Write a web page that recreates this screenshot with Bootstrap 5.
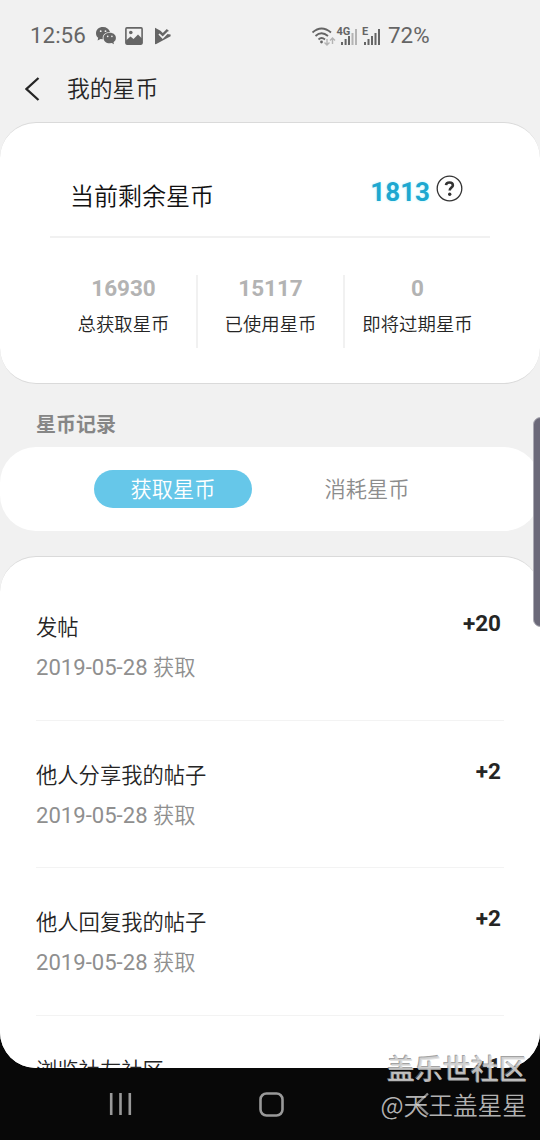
<!DOCTYPE html>
<html lang="zh-CN">
<head>
<meta charset="utf-8">
<meta name="viewport" content="width=device-width, initial-scale=1">
<title>我的星币</title>
<link href="https://cdn.jsdelivr.net/npm/bootstrap@5.3.0/dist/css/bootstrap.min.css" rel="stylesheet">
<style>
body{background:#080808;font-family:Roboto,"Noto Sans CJK SC",sans-serif;color:#252525;overflow:hidden}
svg{display:block;flex:none}
.screen{width:540px;height:1140px}
.page-area{height:1068px;background:#f1f1f1;border-radius:0 0 36px 36px;overflow:hidden}
.han{font-family:"Noto Sans CJK SC",sans-serif;font-weight:350}
.status{height:64px;padding:8px 0 0 30px;color:#656565;font-size:22.4px}
.clock{width:65px}
.icon-photo{margin-left:8px}
.icon-play{margin-left:11px}
.signals{margin-left:139px}
.battery{margin-left:5px}
.appbar{height:58px;padding:0 0 9px 25px;font-size:22.8px}
.appbar-title{margin-left:27px}
.panel{background:#fff;border-radius:36px}
.panel-line{border-top:1px solid #dadada}
.summary{height:262px;padding:0 50px;border-bottom:1px solid #dadada}
.remain{height:115px;border-bottom:2px solid #f1f1f1;padding:0 27px 0 20px}
.remain-label{font-size:24px;color:#111;line-height:34px;padding-top:55px}
.remain-count{font-size:26px;font-weight:700;color:#1da8d0;line-height:32px;padding-top:53px;text-shadow:0 0 3px #b7f5ff}
.help{margin:52px 0 0 6px}
.stats{padding:37px 0 0 1px}
.stat-cell{height:73px;text-align:center;line-height:26px;border-right:2px solid #f1f1f1}
.stat-cell:last-child{border-right:0}
.stat-number{font-size:22.5px;font-weight:700;color:#b3b3b3}
.stat-name{font-size:18.4px;padding-top:9px;white-space:nowrap}
.log-title{height:63px;padding:26px 0 0 36px;font-size:20px;line-height:28px;font-weight:700;color:#868686;font-family:"Noto Sans CJK SC",sans-serif}
.tabs-panel{height:84px;padding-left:94px}
.tab-on,.tab-off{width:158px;height:38px;border-radius:19px;font-size:21.2px;line-height:34px;text-align:center;padding:0 0 3px;border:0}
.tab-on{background:#66c7e9;color:#fff}
.tab-off{margin-left:36px;color:#8c8c8c;background:none}
.records{margin-top:25px;height:560px;border-radius:36px 36px 0 0;padding:16px 36px 0}
.record{height:147.7px;border-bottom:1.5px solid #f3f3f3;padding:36px 3px 0 0}
.record-name{font-size:21.3px;line-height:34px}
.record-date{font-size:22.1px;line-height:30px;color:#8f8f8f;padding-top:8px}
.record-date .han{font-size:21.2px}
.record-score{font-size:22.5px;line-height:25px;font-weight:700;padding-top:2px}
.edge-handle{right:-8px;top:417px;width:15px;height:210px;border-radius:8px;background:#6b6979;border:1px solid #aaa9b2}
.navbar-keys{height:72px;padding-left:109px}
.home-key{margin-left:127px}
.back-key{margin-left:131px}
.watermark{right:13px;top:1050px;text-align:right;color:rgba(218,218,218,.82);white-space:nowrap;font-family:"Noto Sans CJK SC",sans-serif}
.wm-site{font-size:28px;line-height:36px;font-weight:500;text-shadow:-1px -1px 0 rgba(120,120,120,.7)}
.wm-user{font-size:24.7px;line-height:36px;font-weight:350}
</style>
</head>
<body>
<div class="screen position-relative overflow-hidden">
  <main class="page-area">
    <div class="status d-flex align-items-center">
      <div class="clock">12:56</div>
      <svg width="22" height="20" viewBox="0 0 22 20" fill="#656565"><path d="M8 1C3.700 1 1 3.700 1 7.200c0 2 .9 3.500 2.200 4.500L2.600 14.500l3-1.600 2.200.4C7 9 10.500 6 15 6 14.200 3 11.500 1 8 1z"/><path d="M14.800 6.800c-3.800 0-6.300 2.200-6.300 5.200s2.500 5.300 6.300 5.300l2-.3 2.200 1.300-.5-2.100c1.500-1 2.400-2.400 2.400-4.200 0-3-2.500-5.200-6.100-5.200z"/><g fill="#f1f1f1"><circle cx="5.700" cy="5.200" r=".9"/><circle cx="10.500" cy="5.200" r=".9"/><circle cx="12.700" cy="10.400" r=".8"/><circle cx="16.900" cy="10.400" r=".8"/></g></svg>
      <svg class="icon-photo" width="18" height="18" viewBox="0 0 18 18"><rect x=".9" y=".9" width="16.200" height="16.200" rx="1" fill="none" stroke="#656565" stroke-width="1.600"/><path d="M1 13.500l4.500-4 3 2.500L13 7.500l4 4V17H1z" fill="#656565"/><circle cx="5.800" cy="5.500" r="1.800" fill="#656565"/></svg>
      <svg class="icon-play" width="18" height="18" viewBox="0 0 18 18"><path d="M1 .8L6.500 3.800 8.800 6 12.800 2 15 4l-2 3 3.600.6v1.700L1.800 17.300 1 17z" fill="#656565"/><path d="M5 7l3.700 3.700L14.800 4.500" fill="none" stroke="#f1f1f1" stroke-width="1.700"/></svg>
      <svg class="signals" width="72" height="22" viewBox="0 0 72 22"><g fill="none" stroke="#656565" stroke-width="1.800"><path d="M1.500 7.500Q10.500-.5 20 7.500M4.500 11q6-5.500 12.500 0M7.500 14.500q3-3 6.500 0"/></g><circle cx="10.500" cy="17" r="1.400" fill="#656565"/><path d="M16 14v6m-2.500-2.500L16 20l2.500-2.500M21.500 19v-6m-2.500 2.500l2.500-2.500 2.500 2.500" fill="none" stroke="#b4b4b4" stroke-width="1.400"/><g font-family="Roboto,sans-serif" font-weight="700" font-size="11" fill="#656565"><text x="25.500" y="10">4G</text><text x="51" y="10">E</text></g><g fill="#656565"><path d="M30 17h2v3h-2zM33.600 14h2v6h-2zM37 11h2v9h-2zM53 17h2v3h-2zM56.500 14h2v6h-2zM60 11h2v9h-2zM63.500 8h2v12h-2zM67 4h2v16h-2z"/></g><path d="M40.500 8h2v12h-2zM44 4h2v16h-2z" fill="#b4b4b4"/></svg>
      <div class="battery">72%</div>
    </div>
    <header class="appbar d-flex align-items-center">
      <svg width="15" height="24" viewBox="0 0 15 24"><path d="M13.500 1L1.500 12l12 11" fill="none" stroke="#252525" stroke-width="2.300"/></svg>
      <div class="appbar-title han">我的星币</div>
    </header>

    <section class="panel panel-line summary">
      <div class="remain d-flex justify-content-between">
        <div class="remain-label han">当前剩余星币</div>
        <div class="d-flex">
          <div class="remain-count">1813</div>
          <svg class="help" width="27" height="27" viewBox="0 0 27 27"><circle cx="13.500" cy="13.500" r="12.300" fill="none" stroke="#333" stroke-width="1.300"/><path d="M10 10.200Q10.200 7.500 13.500 7.500t3.400 2.700c0 2.300-3.200 2.500-3.200 5.300" fill="none" stroke="#333" stroke-width="2.600"/><circle cx="13.700" cy="19.300" r="1.700" fill="#333"/></svg>
        </div>
      </div>
      <div class="stats row g-0">
        <div class="col stat-cell"><div class="stat-number">16930</div><div class="stat-name han">总获取星币</div></div>
        <div class="col stat-cell"><div class="stat-number">15117</div><div class="stat-name han">已使用星币</div></div>
        <div class="col stat-cell"><div class="stat-number">0</div><div class="stat-name han">即将过期星币</div></div>
      </div>
    </section>

    <div class="log-title">星币记录</div>
    <div class="panel tabs-panel d-flex align-items-center">
      <button class="btn tab-on han">获取星币</button>
      <button class="btn tab-off han">消耗星币</button>
    </div>

    <section class="panel panel-line records">
      <div class="record d-flex justify-content-between"><div><div class="record-name han">发帖</div><div class="record-date">2019-05-28 <span class="han">获取</span></div></div><div class="record-score">+20</div></div>
      <div class="record d-flex justify-content-between"><div><div class="record-name han">他人分享我的帖子</div><div class="record-date">2019-05-28 <span class="han">获取</span></div></div><div class="record-score">+2</div></div>
      <div class="record d-flex justify-content-between"><div><div class="record-name han">他人回复我的帖子</div><div class="record-date">2019-05-28 <span class="han">获取</span></div></div><div class="record-score">+2</div></div>
      <div class="record d-flex justify-content-between"><div><div class="record-name han">浏览社友社区</div></div><div class="record-score">+1</div></div>
    </section>
  </main>

  <nav class="navbar-keys d-flex align-items-center">
    <svg width="23" height="24" viewBox="0 0 23 24"><path d="M2.200 1v22M11.500 1v22M20.800 1v22" stroke="#999" stroke-width="2.600"/></svg>
    <svg class="home-key" width="25" height="25" viewBox="0 0 25 25"><rect x="1.500" y="1.500" width="22" height="22" rx="6" fill="none" stroke="#999" stroke-width="2.600"/></svg>
    <svg class="back-key" width="14" height="24" viewBox="0 0 14 24"><path d="M13 1.500L2 12l11 10.500" fill="none" stroke="#8d8d8d" stroke-width="2.400"/></svg>
  </nav>

  <div class="edge-handle position-absolute"></div>
  <div class="watermark position-absolute"><div class="wm-site">盖乐世社区</div><div class="wm-user">@天王盖星星</div></div>
</div>
<script src="https://cdn.jsdelivr.net/npm/bootstrap@5.3.0/dist/js/bootstrap.bundle.min.js"></script>
</body>
</html>
